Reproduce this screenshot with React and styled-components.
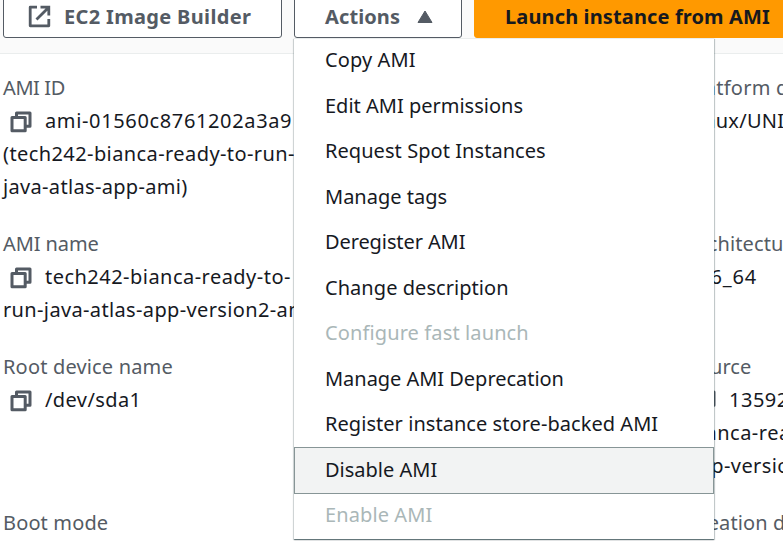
import React from 'react';
import styled, { createGlobalStyle } from 'styled-components';

const GlobalStyle = createGlobalStyle`
  * { box-sizing: border-box; }
  html, body { margin: 0; overflow: hidden; background: #fff; }
  body { font: 20px/33px "Noto Sans", "Open Sans", sans-serif; color: #16191f; }
  ul, dl, dd { margin: 0; padding: 0; }
`;

const Page = styled.div`
  width: 783px;
  height: 543px;
  overflow: hidden;
`;

const Header = styled.header`
  display: flex;
  align-items: flex-end;
  gap: 12px;
  height: 54px;
  padding: 0 0 15px 3px;
  background: #fafafa;
  border-bottom: 1px solid #eaeded;
`;

const Button = styled.button`
  display: flex;
  flex: none;
  align-items: center;
  width: ${(p) => p.$width}px;
  height: 45px;
  padding: 2px 0 0 30px;
  border: 1.5px solid ${(p) => (p.$primary ? '#ff9900' : '#545b64')};
  border-radius: 3px;
  background: ${(p) => (p.$primary ? '#ff9900' : '#fff')};
  color: ${(p) => (p.$primary ? '#16191f' : '#545b64')};
  font: bold 20px/30px "Noto Sans", "Open Sans", sans-serif;
  letter-spacing: ${(p) => p.$track || 0}px;
  white-space: nowrap;
`;

const ExternalSvg = styled.svg`
  flex: none;
  margin: 0 13px 0 -6px;
`;

const CaretSvg = styled.svg`
  flex: none;
  margin-left: 17px;
`;

const Dropdown = styled.div`
  position: relative;
  flex: none;
`;

const Menu = styled.ul`
  position: absolute;
  z-index: 1;
  top: 45px;
  left: 0;
  width: 420px;
  height: 501px;
  list-style: none;
  background: #fff;
  border-top: 1px solid #eaeded;
  box-shadow: 0 1px 1px rgba(0, 28, 36, 0.45), 1px 1px 1px rgba(0, 28, 36, 0.18),
    -1px 1px 1px rgba(0, 28, 36, 0.12);
`;

const MenuItem = styled.li`
  height: 45.5px;
  padding-left: 30px;
  border: 1px solid transparent;
  line-height: 42px;
  letter-spacing: ${(p) => p.$track || 0}px;
  white-space: nowrap;
  color: ${(p) => (p.$disabled ? '#aab7b8' : '#16191f')};
  &:first-child {
    margin-top: -1px;
  }
  ${(p) =>
    p.$active &&
    'height: 47px; margin: -0.5px 0 -1px; line-height: 43px; background: #f2f3f3; border-color: #879596;'}
`;

const Details = styled.main`
  display: grid;
  grid-template-columns: 684px 300px;
  row-gap: 24px;
  padding: 17px 0 0 3px;
`;

const Field = styled.dl`
  white-space: nowrap;
`;

const Label = styled.dt`
  color: #545b64;
  letter-spacing: ${(p) => p.$track || 0}px;
`;

const Value = styled.dd`
  display: flex;
  align-items: center;
  height: 33px;
  letter-spacing: ${(p) => p.$track || 0}px;
`;

const CopySvg = styled.svg`
  flex: none;
  margin: 3px 13px 0 7px;
`;

const ExternalIcon = () => (
  <ExternalSvg width="23" height="23" viewBox="0 0 23 23" fill="none" stroke="#545b64" strokeWidth="2.8">
    <path d="M9 2.2H2.2V20.8H20.8V14" strokeLinejoin="round" />
    <path d="M12.5 2.2H20.8V10.5M20.3 2.7L8.5 14.5" />
  </ExternalSvg>
);

const CaretIcon = () => (
  <CaretSvg width="16" height="14" viewBox="0 0 16 14">
    <path d="M8 1L15 12.5H1Z" fill="#545b64" stroke="#545b64" strokeLinejoin="round" />
  </CaretSvg>
);

const CopyIcon = () => (
  <CopySvg width="22" height="22" viewBox="0 0 22 22" fill="none" stroke="#545b64" strokeWidth="3" strokeLinejoin="round">
    <path d="M2 6.5H15.2V19.7H2Z" />
    <path d="M6.5 6.5V2H20V15.2H15.5" />
  </CopySvg>
);

const menuItems = [
  { text: 'Copy AMI', track: 0.1 },
  { text: 'Edit AMI permissions', track: 0 },
  { text: 'Request Spot Instances', track: 0.06 },
  { text: 'Manage tags', track: 0 },
  { text: 'Deregister AMI', track: -0.1 },
  { text: 'Change description', track: 0.05 },
  { text: 'Configure fast launch', track: 0.12, disabled: true },
  { text: 'Manage AMI Deprecation', track: -0.03 },
  { text: 'Register instance store-backed AMI', track: 0.05 },
  { text: 'Disable AMI', track: 0, active: true },
  { text: 'Enable AMI', track: 0.1, disabled: true },
];

const fields = [
  {
    label: ['AMI ID', -0.4],
    copy: true,
    lines: [['ami-01560c8761202a3a9', 0.64], ['(tech242-bianca-ready-to-run-', 0.41], ['java-atlas-app-ami)', 0.33]],
  },
  { label: ['Platform details', 0.25], lines: [['Linux/UNIX', 0.25]] },
  {
    label: ['AMI name', -0.1],
    copy: true,
    lines: [['tech242-bianca-ready-to-', 0.47], ['run-java-atlas-app-version2-ami', 0.36]],
  },
  { label: ['Architecture', 0.1], lines: [['x86_64', 0.8]] },
  { label: ['Root device name', 0.17], copy: true, lines: [['/dev/sda1', 0.4]] },
  {
    label: ['Source', 0],
    copy: true,
    lines: [['135928476186/bia', 0.5], ['bianca-ready-to-run', 0.5], ['app-version2-ami', 0.4]],
  },
  { label: ['Boot mode', 0.14], lines: [['–', 0]] },
  { label: ['Creation date', 0.1], lines: [['–', 0]] },
];

export default function App() {
  return (
    <Page>
      <GlobalStyle />
      <Header>
        <Button $width={279} $track={0.34}>
          <ExternalIcon />
          EC2 Image Builder
        </Button>
        <Dropdown>
          <Button $width={168} $track={0.11}>
            Actions
            <CaretIcon />
          </Button>
          <Menu>
            {menuItems.map((item) => (
              <MenuItem key={item.text} $track={item.track} $disabled={item.disabled} $active={item.active}>
                {item.text}
              </MenuItem>
            ))}
          </Menu>
        </Dropdown>
        <Button $width={328} $track={0.13} $primary>
          Launch instance from AMI
        </Button>
      </Header>
      <Details>
        {fields.map(({ label, copy, lines }) => (
          <Field key={label[0]}>
            <Label $track={label[1]}>{label[0]}</Label>
            {lines.map(([text, track], i) => (
              <Value key={text} $track={track}>
                {copy && i === 0 && <CopyIcon />}
                {text}
              </Value>
            ))}
          </Field>
        ))}
      </Details>
    </Page>
  );
}
